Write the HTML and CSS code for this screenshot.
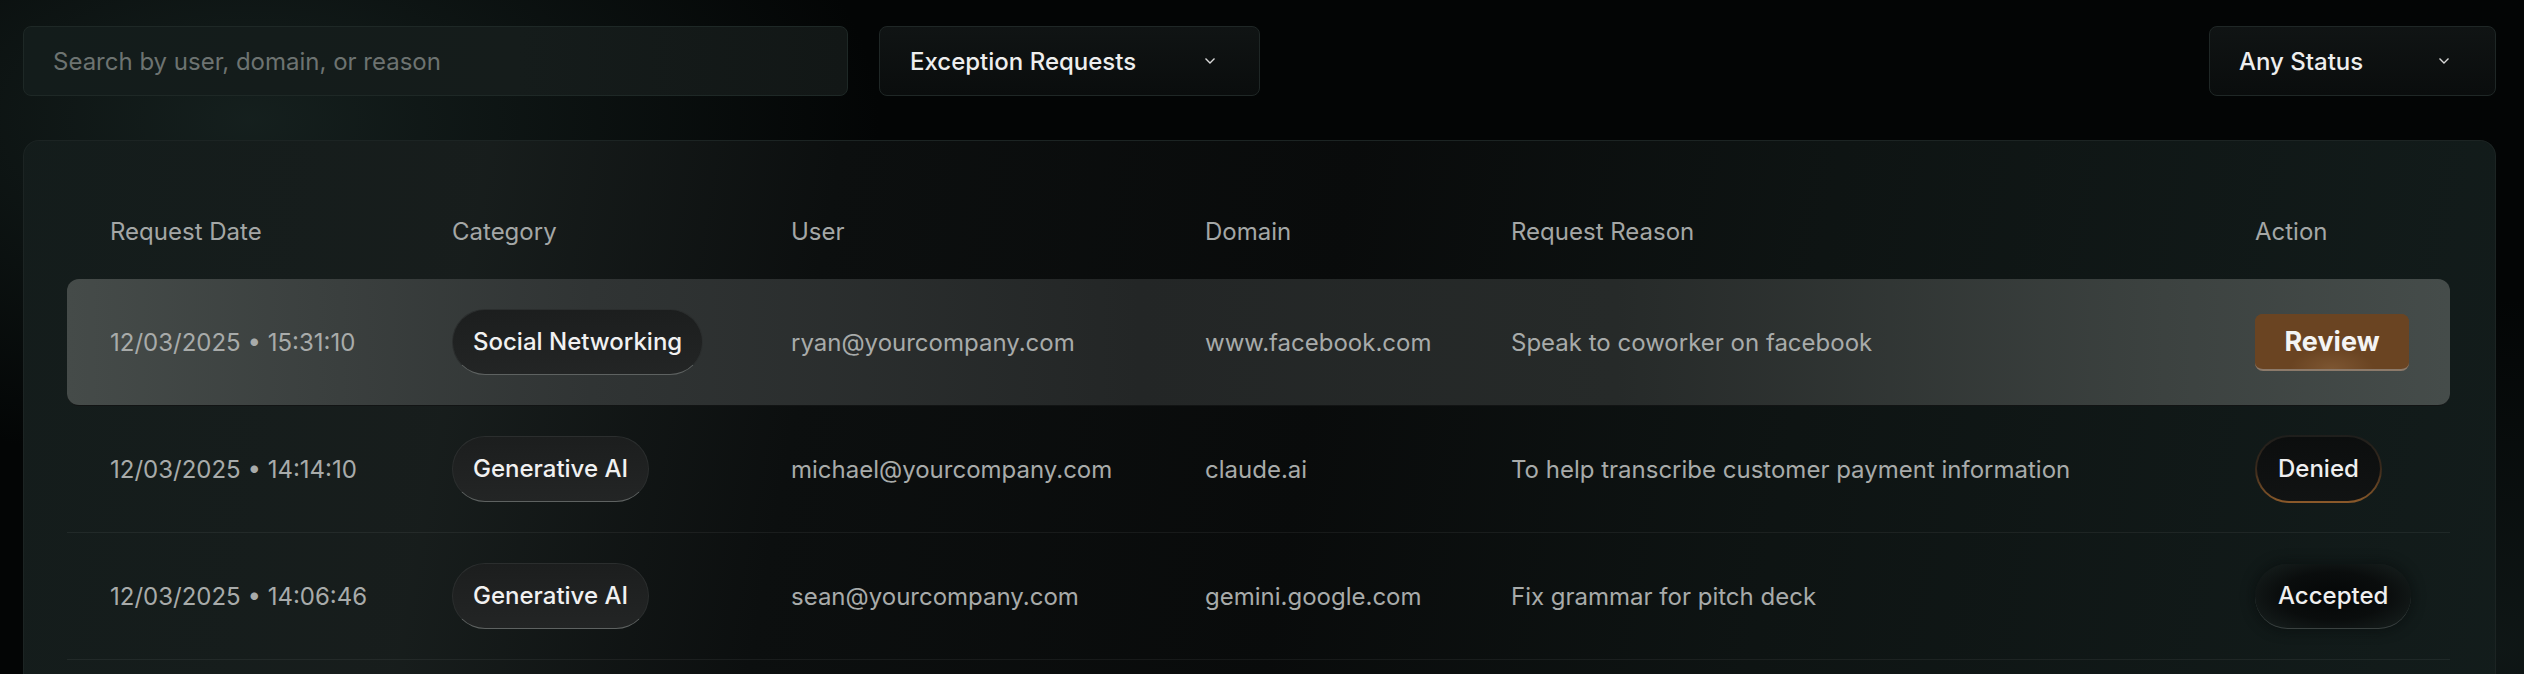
FILE: index.html
```html
<!DOCTYPE html>
<html lang="en">
<head>
    <meta charset="UTF-8">
    <meta name="viewport" content="width=device-width, initial-scale=1.0">
    <title>Exception Requests</title>
    <link rel="stylesheet" href="styles.css">
</head>
<body>
    <div class="toolbar">
        <input type="text" class="search" placeholder="Search by user, domain, or reason">
        <button class="select select-type">
            <span>Exception Requests</span>
            <svg class="chevron" width="12" height="8" viewBox="0 0 12 8"><polyline points="1.5,1.5 6,6 10.5,1.5" fill="none" stroke="#d8d8d8" stroke-width="1.4"/></svg>
        </button>
        <button class="select select-status">
            <span>Any Status</span>
            <svg class="chevron" width="12" height="8" viewBox="0 0 12 8"><polyline points="1.5,1.5 6,6 10.5,1.5" fill="none" stroke="#d8d8d8" stroke-width="1.4"/></svg>
        </button>
    </div>

    <div class="panel">
        <div class="grid head">
            <div>Request Date</div>
            <div>Category</div>
            <div>User</div>
            <div>Domain</div>
            <div>Request Reason</div>
            <div>Action</div>
        </div>

        <div class="grid row active">
            <div>12/03/2025 &bull; 15:31:10</div>
            <div><span class="tag">Social Networking</span></div>
            <div>ryan@yourcompany.com</div>
            <div>www.facebook.com</div>
            <div>Speak to coworker on facebook</div>
            <div><button class="review">Review</button></div>
        </div>

        <div class="grid row">
            <div>12/03/2025 &bull; 14:14:10</div>
            <div><span class="tag">Generative AI</span></div>
            <div>michael@yourcompany.com</div>
            <div>claude.ai</div>
            <div>To help transcribe customer payment information</div>
            <div><span class="status denied">Denied</span></div>
        </div>

        <div class="grid row">
            <div>12/03/2025 &bull; 14:06:46</div>
            <div><span class="tag">Generative AI</span></div>
            <div>sean@yourcompany.com</div>
            <div>gemini.google.com</div>
            <div>Fix grammar for pitch deck</div>
            <div><span class="status accepted">Accepted</span></div>
        </div>
    </div>
</body>
</html>
```

FILE: styles.css
```css
html, body {
    margin: 0;
    height: 674px;
    overflow: hidden;
}
body {
    font-family: Inter, "Liberation Sans", sans-serif;
    font-size: 24px;
    color: #a8abaa;
    background:
        radial-gradient(ellipse 900px 500px at 250px 120px, rgba(24, 36, 34, 0.85), rgba(3, 6, 6, 0) 70%),
        radial-gradient(ellipse 700px 500px at 2500px 650px, rgba(20, 30, 29, 0.7), rgba(3, 6, 6, 0) 70%),
        #030505;
}
.toolbar {
    display: flex;
    align-items: center;
    padding: 26px 28px 0 23px;
}
.search {
    width: 825px;
    height: 70px;
    box-sizing: border-box;
    padding: 0 29px;
    font-family: inherit;
    font-size: 24px;
    color: #ddd;
    background: linear-gradient(90deg, #131c1b, #151c1b 60%, #121716);
    border: 1px solid #1e2826;
    border-radius: 8px;
    outline: none;
}
.search::placeholder {
    color: #6d7371;
}
.select {
    display: flex;
    align-items: center;
    justify-content: space-between;
    height: 70px;
    box-sizing: border-box;
    font-family: inherit;
    font-size: 24px;
    font-weight: 500;
    color: #eeeeee;
    background: linear-gradient(180deg, #101414, #0a0d0d);
    border: 1px solid #1f2726;
    border-radius: 8px;
    cursor: pointer;
}
.select-type {
    width: 381px;
    margin-left: 31px;
    padding: 0 43px 0 30px;
}
.select-status {
    width: 287px;
    margin-left: auto;
    padding: 0 45px 0 29px;
}
.chevron {
    display: block;
}
.panel {
    box-sizing: border-box;
    margin: 44px 28px 0 23px;
    height: 534px;
    padding: 0 45px 0 43px;
    border: 1px solid #1c2423;
    border-bottom: none;
    border-radius: 16px 16px 0 0;
    background:
        linear-gradient(100deg, rgba(20, 29, 28, 0.95) 0%, rgba(24, 30, 29, 0.95) 18%, rgba(12, 15, 15, 0.95) 32%, rgba(9, 11, 11, 0.97) 52%, rgba(14, 20, 19, 0.95) 70%, rgba(19, 29, 28, 0.95) 100%),
        #0b0e0e;
}
.grid {
    display: grid;
    grid-template-columns: 342px 339px 414px 306px 744px 1fr;
    align-items: center;
    padding-left: 43px;
}
.head {
    padding-top: 75px;
    padding-bottom: 31px;
    line-height: 32px;
    color: #a4a7a6;
}
.row {
    height: 126px;
    border-bottom: 1px solid rgba(255, 255, 255, 0.06);
    white-space: nowrap;
}
.active {
    border-radius: 12px;
    border-bottom-color: #121414;
    background: linear-gradient(90deg, #454b49 0%, #303434 22%, #232626 45%, #262a29 65%, #3c4240 88%, #454c4a 100%);
}
.tag {
    display: inline-block;
    padding: 17px 20px;
    line-height: 30px;
    font-weight: 500;
    color: #f1f1f1;
    background: linear-gradient(180deg, #1c1e1e, #232525);
    border: 1px solid #2b2e2e;
    border-bottom-color: #5e6261;
    border-radius: 34px;
}
.review {
    width: 154px;
    height: 57px;
    font-family: inherit;
    font-size: 27px;
    font-weight: 700;
    color: #f4f4f4;
    background: radial-gradient(ellipse 60px 30px at 50% 100%, #7d5632, #6a4422 70%), #6a4422;
    border: none;
    border-bottom: 2px solid #8c7a6a;
    border-radius: 8px;
    cursor: pointer;
}
.status {
    display: inline-block;
    padding: 17px 21px;
    line-height: 30px;
    font-weight: 500;
    color: #efefef;
    border-radius: 34px;
}
.denied {
    border: 2px solid transparent;
    background:
        linear-gradient(#0c0e0e, #111313) padding-box,
        linear-gradient(180deg, #1e1e1c, #3a2a1c 50%, #8c5a2a) border-box;
}
.accepted {
    padding: 17px 23px;
    background: radial-gradient(ellipse 90px 40px at 50% 50%, #050707, #0a0d0d 60%, #141b1a);
    box-shadow: 0 0 12px 2px rgba(6, 9, 9, 0.5);
    border-bottom: 1px solid #3a4140;
}
```
